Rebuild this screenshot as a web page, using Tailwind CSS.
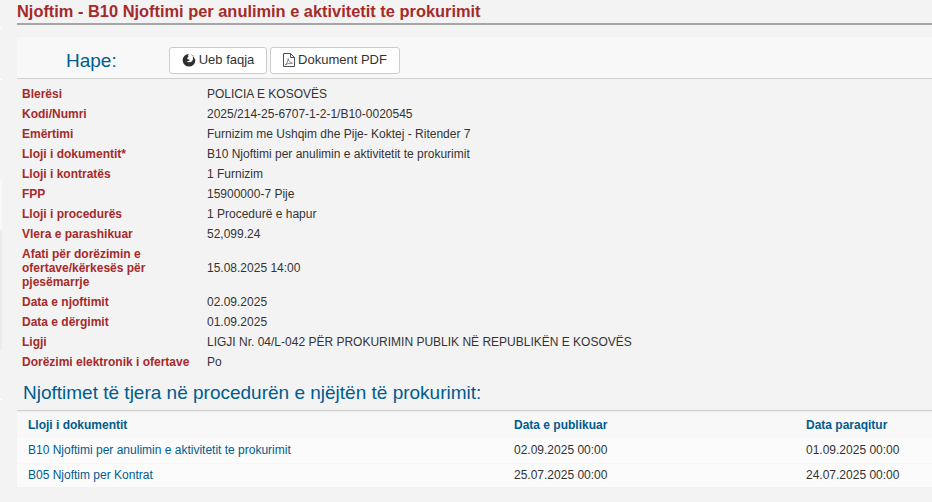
<!DOCTYPE html>
<html lang="sq">
<head>
  <meta charset="UTF-8" />
  <title>Njoftim</title>
  <script src="https://cdn.jsdelivr.net/npm/@tailwindcss/browser@4"></script>
</head>
<body class="relative h-[502px] overflow-hidden bg-[#f3f3f3] font-['Liberation_Sans',Arial,sans-serif] text-[12px] text-[#333]">
  <!-- bits of the window behind, at the far left edge -->
  <div class="absolute top-[27px] left-0 h-px w-[2px] bg-white"></div>
  <div class="absolute top-[79px] left-0 h-px w-[2px] bg-white"></div>
  <div class="absolute top-[179px] left-0 h-[51px] w-[2px] bg-[#f8f8f8]"></div>
  <div class="absolute top-[230px] left-0 h-[120px] w-[2px] bg-[#ebebeb]"></div>
  <div class="absolute top-[399px] left-0 h-px w-[2px] bg-white"></div>

  <div class="pl-[17px]">
    <h1 class="h-[25px] border-b-2 border-[#a6a6a6] pt-px text-[16.4px] leading-[21px] font-bold text-[#a52a2a]">Njoftim - B10 Njoftimi per anulimin e aktivitetit te prokurimit</h1>

    <div class="mt-[12px] flex h-[42px] items-start border-b border-[#d0d0d0] bg-[#f8f8f8] pt-[10px]">
      <span class="mt-[2px] ml-[49px] w-[103px] text-[19px] leading-[24px] text-[#005c8f]">Hape:</span>
      <div class="flex gap-[3px]">
        <button class="flex h-[27px] w-[98px] items-center justify-center gap-[3px] rounded-[3px] border border-[#ccc] bg-white pb-[2px] text-[13px]">
          <svg class="h-[14px] w-[14px]" viewBox="0 0 14 14">
            <circle cx="7" cy="7.300" r="6.300" fill="#2f2f2f"/>
            <path fill="#fff" d="M8 .6l5.400 4.200-.4 1.900c-.3-1.500-1.200-2.700-2.400-3.300.5 1.200.6 2.400.1 3.500-.8 1.800-2.900 2.700-4.700 2-.6-.2-1-.6-1.300-1 .9.300 2.200.2 2.800-.5.300-.4 0-.8-.5-.9-.9-.1-1.700-.5-1.800-1.300 0-.6.600-.9 1.200-1.100.4-.2.100-.6-.1-.9C5.800 2 6.600 1 8 .6z"/>
          </svg>
          Ueb faqja
        </button>
        <button class="flex h-[27px] w-[130px] items-center justify-center gap-[3px] rounded-[3px] border border-[#ccc] bg-white pb-[2px] text-[13px]">
          <svg class="h-[14px] w-[12px]" viewBox="0 0 12 14" fill="none" stroke="#4a4f5a" stroke-width="1"><path d="M.5.500h7l4 4v9h-11z"/><path d="M7.500.500v4h4"/><path stroke="#8a6f78" stroke-width=".9" d="M2 12c1.800-1 3-3.500 3.200-6.500.5 2.800 1.700 4.300 4.300 4.700-2.300-.1-5.200.3-7.500 1.800z"/></svg>
          Dokument PDF
        </button>
      </div>
    </div>

    <dl class="mt-[5px] grid grid-cols-[185px_1fr] items-center pl-[5px] leading-[14px] [&>dd]:flex [&>dd]:min-h-[20px] [&>dd]:items-center [&>dt]:flex [&>dt]:min-h-[20px] [&>dt]:items-center [&>dt]:font-bold [&>dt]:text-[#a52a2a]">
      <dt>Blerësi</dt><dd>POLICIA E KOSOVËS</dd>
      <dt>Kodi/Numri</dt><dd>2025/214-25-6707-1-2-1/B10-0020545</dd>
      <dt>Emërtimi</dt><dd>Furnizim me Ushqim dhe Pije- Koktej - Ritender 7</dd>
      <dt>Lloji i dokumentit*</dt><dd>B10 Njoftimi per anulimin e aktivitetit te prokurimit</dd>
      <dt>Lloji i kontratës</dt><dd>1 Furnizim</dd>
      <dt>FPP</dt><dd>15900000-7 Pije</dd>
      <dt>Lloji i procedurës</dt><dd>1 Procedurë e hapur</dd>
      <dt>Vlera e parashikuar</dt><dd>52,099.24</dd>
      <dt class="w-[135px] py-[3px]">Afati për dorëzimin e ofertave/kërkesës për pjesëmarrje</dt><dd>15.08.2025 14:00</dd>
      <dt>Data e njoftimit</dt><dd>02.09.2025</dd>
      <dt>Data e dërgimit</dt><dd>01.09.2025</dd>
      <dt>Ligji</dt><dd>LIGJI Nr. 04/L-042 PËR PROKURIMIN PUBLIK NË REPUBLIKËN E KOSOVËS</dd>
      <dt>Dorëzimi elektronik i ofertave</dt><dd>Po</dd>
    </dl>

    <h2 class="mt-[9px] h-[30px] border-b border-[#cfcfcf] pl-[6px] text-[19px] leading-[24px] text-[#005c8f]">Njoftimet të tjera në procedurën e njëjtën të prokurimit:</h2>

    <table class="mt-[2px] w-full table-fixed border-collapse text-left">
      <thead class="bg-[#f8f8f8]">
        <tr class="h-[25px] font-bold text-[#005c8f]">
          <th class="w-[497px] pb-[2px] pl-[11px]">Lloji i dokumentit</th>
          <th class="w-[292px] pb-[2px]">Data e publikuar</th>
          <th class="pb-[2px]">Data paraqitur</th>
        </tr>
      </thead>
      <tbody class="bg-[#fbfbfb]">
        <tr class="h-[25px] border-b border-[#f7f7f7]">
          <td class="pl-[11px] text-[#005c8f]">B10 Njoftimi per anulimin e aktivitetit te prokurimit</td>
          <td>02.09.2025 00:00</td>
          <td>01.09.2025 00:00</td>
        </tr>
        <tr class="h-[24px]">
          <td class="pl-[11px] text-[#005c8f]">B05 Njoftim per Kontrat</td>
          <td>25.07.2025 00:00</td>
          <td>24.07.2025 00:00</td>
        </tr>
      </tbody>
    </table>
  </div>
</body>
</html>
